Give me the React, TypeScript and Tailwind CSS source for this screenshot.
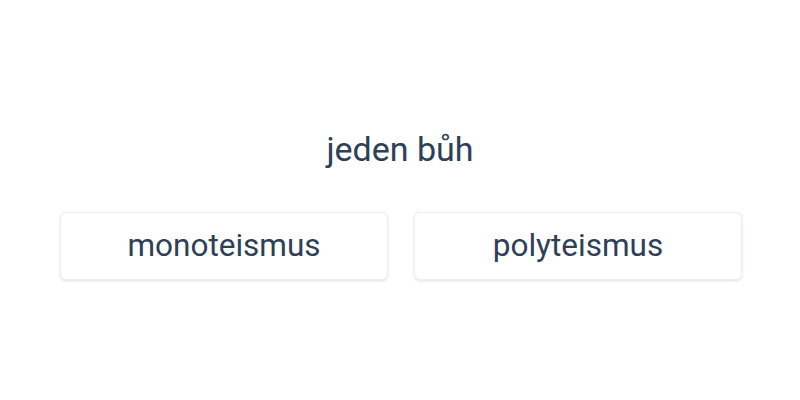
import React from 'react';

// Jednoduchá kartička: pojem nahoře, dvě možnosti odpovědi pod ním
const options = ['monoteismus', 'polyteismus'];

export default function App() {
  return (
    <div
      className="flex h-[400px] w-[800px] flex-col items-center justify-center bg-white text-[#2d4056]"
      style={{ fontFamily: 'Roboto, "Noto Sans", sans-serif' }}
    >
      <div className="mt-[9px] text-[34px] leading-[40px]">jeden bůh</div>
      <div className="mt-[43px] flex w-full gap-[26px] pl-[60px] pr-[58px]">
        {options.map((opt) => (
          <button
            key={opt}
            className="flex h-[68px] flex-1 items-center justify-center rounded-[6px] border border-[#efefef] bg-white text-[31.5px] text-[#2d4056] shadow-[0_1px_3px_rgba(0,0,0,0.13)]"
          >
            {opt}
          </button>
        ))}
      </div>
    </div>
  );
}
